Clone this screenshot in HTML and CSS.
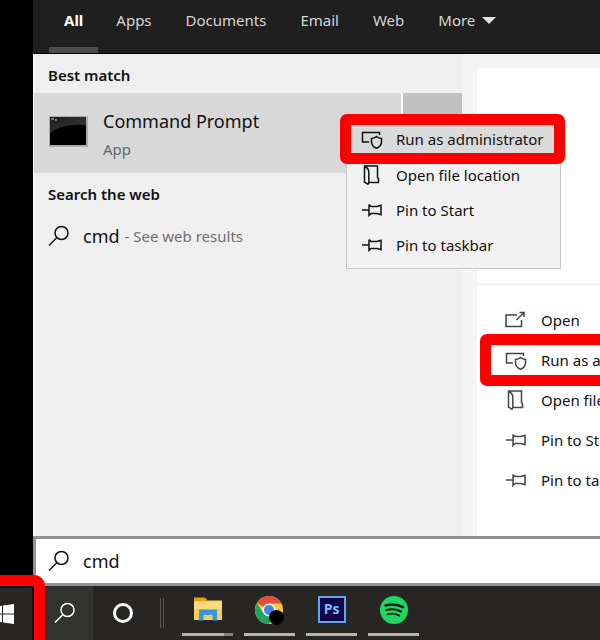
FILE: index.html
```html
<!DOCTYPE html>
<html lang="en">
<head>
  <meta charset="UTF-8">
  <title>Search - cmd</title>
  <meta name="viewport" content="width=device-width, initial-scale=1.0">
  <link rel="stylesheet" href="styles.css">
</head>
<body>
  <!-- Shared icons -->
  <svg class="sprite" aria-hidden="true">
    <symbol id="i-search" viewBox="0 0 22 22">
      <circle cx="13.5" cy="8" r="6.5"/>
      <path d="M9 12.5 1 20.5"/>
    </symbol>
    <symbol id="i-admin" viewBox="0 0 22 20">
      <path d="M8 13H1.500V3.500H18.500V6"/>
      <path d="M15.500 7.500c1.500 1.300 3 1.800 5 1.900v3.600c0 3-2 5-5 6.200-3-1.200-5-3.200-5-6.200V9.400c2-.1 3.500-.6 5-1.900z"/>
    </symbol>
    <symbol id="i-folder" viewBox="0 0 22 20">
      <path d="M8 17.500H17.500V14L16.500 12.500V1H3.500V17L7 19.300C8.300 18 7.800 16 7.800 14V7C7.800 4.500 6 2.500 3.500 1"/>
    </symbol>
    <symbol id="i-pin" viewBox="0 0 22 20">
      <path d="M1 10H8M8 4.500V15.500L10 13.500H16L20 14.800V5.200L16 6.500H10L8 4.500"/>
    </symbol>
    <symbol id="i-open" viewBox="0 0 22 20">
      <path d="M12 5H1V16.500H16.500V10M11.500 10 19 2.500M14.500 2.500H19V7"/>
    </symbol>
  </svg>

  <main class="search-window">
    <nav class="tabs">
      <button class="tab active">All</button>
      <button class="tab">Apps</button>
      <button class="tab">Documents</button>
      <button class="tab">Email</button>
      <button class="tab">Web</button>
      <button class="tab">More <span class="caret"></span></button>
    </nav>

    <div class="panes">
      <section class="results">
        <h2>Best match</h2>
        <div class="best">
          <button class="best-main">
            <svg class="cmd-icon" viewBox="0 0 39 31">
              <defs>
                <linearGradient id="shine" x1="0" y1="0" x2="1" y2="1">
                  <stop offset="0" stop-color="#1c1c1c"/>
                  <stop offset="1" stop-color="#3c3c3c"/>
                </linearGradient>
              </defs>
              <rect width="39" height="31" fill="#aaaab2"/>
              <rect x="1" y="1" width="36" height="28" fill="#000"/>
              <path d="M1 1H37V9C24 8 10 10 1 17z" fill="url(#shine)"/>
              <path d="M2 3h3M6 4h2" stroke="#ccc"/>
            </svg>
            <span class="best-text">
              <span class="best-name">Command Prompt</span>
              <span class="best-kind">App</span>
            </span>
          </button>
          <button class="best-more" aria-label="Show details"></button>

          <div class="context-menu">
            <button class="menu-item highlight"><svg class="icon"><use href="#i-admin"/></svg>Run as administrator</button>
            <button class="menu-item"><svg class="icon"><use href="#i-folder"/></svg>Open file location</button>
            <button class="menu-item"><svg class="icon"><use href="#i-pin"/></svg>Pin to Start</button>
            <button class="menu-item"><svg class="icon"><use href="#i-pin"/></svg>Pin to taskbar</button>
          </div>
        </div>

        <h2>Search the web</h2>
        <button class="web-result">
          <svg class="glass"><use href="#i-search"/></svg>
          <span class="query">cmd</span>
          <span class="hint">- See web results</span>
        </button>
      </section>

      <section class="preview">
        <div class="card app-card"></div>
        <div class="card actions">
          <button class="action"><svg class="icon"><use href="#i-open"/></svg>Open</button>
          <button class="action highlight"><svg class="icon"><use href="#i-admin"/></svg>Run as administrator</button>
          <button class="action"><svg class="icon"><use href="#i-folder"/></svg>Open file location</button>
          <button class="action"><svg class="icon"><use href="#i-pin"/></svg>Pin to Start</button>
          <button class="action"><svg class="icon"><use href="#i-pin"/></svg>Pin to taskbar</button>
        </div>
      </section>
    </div>

    <label class="search-box">
      <svg class="glass"><use href="#i-search"/></svg>
      <input type="text" value="cmd" aria-label="Search">
    </label>
  </main>

  <footer class="taskbar">
    <button class="start highlight" aria-label="Start">
      <svg width="14" height="20" viewBox="6 0 14 20" fill="#fff">
        <path d="M0 3 8 1.800V9.500H0zM9 1.600 20 0V9.500H9zM0 10.500H8V18.200L0 17zM9 10.500H20V20L9 18.400z"/>
      </svg>
    </button>
    <button class="task-search" aria-label="Search">
      <svg class="glass"><use href="#i-search"/></svg>
    </button>
    <button class="cortana" aria-label="Cortana"><span class="ring"></span></button>
    <span class="divider"></span>
    <div class="apps">
      <button class="app grouped" aria-label="File Explorer">
        <svg width="28" height="28" viewBox="0 0 28 28">
          <path d="M0 2.500H11L13 4.500H28V24H0z" fill="#f8ce55"/>
          <path d="M0 1.500H11L13 3.500V5.500H0z" fill="#e5a00d"/>
          <path d="M0 5.500H28V13H0z" fill="#fbdc7c"/>
          <path d="M5 24.500V13.500H23V24.500H18.500V19H9.500V24.500z" fill="#3597dc"/>
        </svg>
      </button>
      <button class="app" aria-label="Chrome">
        <svg width="30" height="30" viewBox="0 0 30 30">
          <circle cx="14" cy="15" r="14" fill="#fbc93d"/>
          <path d="M14 15 1.900 8A14 14 0 0 1 26.500 8.500H14z" fill="#dd4f43"/>
          <path d="M1.900 8A14 14 0 0 0 14 29L19.600 18.200 8.400 18.200z" fill="#1ea362"/>
          <circle cx="14" cy="15" r="6.500" fill="#f3f3f3"/>
          <circle cx="14" cy="15" r="5" fill="#4285e8"/>
          <circle cx="21.500" cy="22.500" r="7.500" fill="#000"/>
        </svg>
      </button>
      <button class="app" aria-label="Photoshop"><span class="ps">Ps</span></button>
      <button class="app" aria-label="Spotify">
        <svg width="28" height="28" viewBox="0 0 28 28">
          <circle cx="14" cy="14" r="14" fill="#1ed760"/>
          <g fill="none" stroke="#191919" stroke-linecap="round">
            <path d="M5.500 9.500C11 8 18 8.500 23 11.200" stroke-width="2.600"/>
            <path d="M6.500 14C11.500 12.700 17 13.300 21 15.500" stroke-width="2.200"/>
            <path d="M7.500 18.200C11.500 17.200 16 17.700 19.500 19.700" stroke-width="1.800"/>
          </g>
        </svg>
      </button>
    </div>
  </footer>
</body>
</html>
```
FILE: styles.css
```css
* {
  box-sizing: border-box;
}

body {
  margin: 0;
  min-height: 100vh;
  display: flex;
  flex-direction: column;
  background: #000;
  color: #111;
  font-family: "Noto Sans", "Open Sans", sans-serif;
  font-size: 15px;
  line-height: 20px;
  overflow: hidden;
}

button {
  margin: 0;
  padding: 0;
  border: none;
  background: none;
  color: inherit;
  font: inherit;
  text-align: left;
  white-space: nowrap;
}

svg {
  flex: none;
}

.sprite {
  position: absolute;
  width: 0;
  height: 0;
}

.icon {
  width: 22px;
  height: 20px;
  fill: none;
  stroke: currentColor;
  stroke-width: 1.5;
}

.glass {
  width: 22px;
  height: 22px;
  fill: none;
  stroke: currentColor;
  stroke-width: 1.5;
}

/* Red marker box round a control */
.highlight {
  position: relative;
}

.highlight::after {
  content: "";
  position: absolute;
  inset: -11px;
  border: 11px solid #f00;
  border-radius: 7px;
  z-index: 2;
}

.search-window {
  flex: 1;
  display: flex;
  flex-direction: column;
  margin-left: 33px;
}

/* Tabs */
.tabs {
  display: flex;
  gap: 2px;
  height: 54px;
  padding-left: 16px;
  background: #1f1f1f;
  border-bottom: 1px solid #000;
  color: #d6d6d6;
}

.tab {
  padding: 2px 16px 10px;
  border-bottom: 6px solid transparent;
}

.tab.active {
  padding-left: 15px;
  padding-right: 15px;
  color: #fff;
  font-weight: bold;
  border-color: #4b4b4b;
}

.caret {
  display: inline-block;
  margin-left: 3px;
  border: 7px solid transparent;
  border-top-color: #e0e0e0;
  border-bottom: none;
  vertical-align: 2px;
}

/* Results */
.panes {
  flex: 1;
  display: grid;
  grid-template-columns: 428px 1fr;
  border-left: 1px solid #fff;
  background: #f4f4f4;
}

.results {
  background: #efefef;
}

h2 {
  margin: 0;
  padding: 11px 14px 8px;
  font-size: 15px;
  line-height: 20px;
  font-weight: 600;
}

.best {
  position: relative;
  display: flex;
  gap: 2px;
  height: 80px;
  background: #fff;
}

.best-main {
  flex: 1;
  display: flex;
  align-items: center;
  gap: 15px;
  padding-left: 15px;
  background: #d8d8d8;
}

.cmd-icon {
  width: 39px;
  height: 31px;
  margin-top: -4px;
}

.best-text {
  display: flex;
  flex-direction: column;
  gap: 6px;
  padding-top: 2px;
}

.best-name {
  font-size: 18px;
  line-height: 24px;
}

.best-kind {
  color: #666;
}

.best-more {
  width: 59px;
  background: #c1c1c1;
}

.web-result {
  display: flex;
  align-items: center;
  width: 100%;
  padding: 12px 14px;
}

.query {
  margin: 0 5px 0 13px;
  font-size: 18px;
  line-height: 24px;
}

.hint {
  color: #707070;
}

/* Context menu */
.context-menu {
  position: absolute;
  left: 312px;
  top: 26px;
  z-index: 3;
  width: 215px;
  padding: 5px 6px 6px 4px;
  border: 1px solid #c8c8c8;
  background: #f2f2f2;
}

.menu-item {
  display: flex;
  align-items: center;
  gap: 13px;
  width: 100%;
  height: 35px;
  padding-left: 10px;
}

.menu-item.highlight {
  height: 28px;
  margin-bottom: 4px;
  background: #dadada;
}

/* Preview */
.preview {
  display: flex;
  flex-direction: column;
  gap: 3px;
  padding: 14px 0 0 15px;
  overflow: hidden;
}

.card {
  background: #fff;
}

.app-card {
  height: 215px;
}

.actions {
  flex: 1;
  display: flex;
  flex-direction: column;
  gap: 10px;
  padding: 19px 0 20px 14px;
}

.action {
  display: flex;
  align-items: center;
  gap: 14px;
  height: 30px;
  padding-left: 14px;
}

.action .icon {
  color: #444;
}

/* Search box */
.search-box {
  display: flex;
  align-items: center;
  height: 50px;
  padding-left: 12px;
  border: 3px solid #929292;
  border-right: none;
  background: #fff;
}

.search-box input {
  flex: 1;
  min-width: 0;
  margin-left: 13px;
  padding: 0;
  border: none;
  outline: none;
  color: inherit;
  font: inherit;
  font-size: 18px;
}

/* Taskbar */
.taskbar {
  display: flex;
  height: 54px;
  background: #272624;
  color: #fff;
}

.start {
  display: flex;
  align-items: center;
  width: 34px;
  border: solid #0c0c0c;
  border-width: 2px 2px 0 0;
}

.start.highlight::after {
  inset: -13px;
  border-radius: 11px;
}

.task-search {
  display: flex;
  align-items: center;
  width: 59px;
  padding-left: 20px;
  background: #333332;
}

.cortana {
  display: flex;
  align-items: center;
  justify-content: center;
  width: 60px;
}

.ring {
  width: 20px;
  height: 20px;
  border: 3px solid #fff;
  border-radius: 50%;
}

.divider {
  width: 4px;
  height: 30px;
  margin: 12px 18px 0 7px;
  border: solid #555;
  border-width: 0 1px;
}

.apps {
  display: flex;
  gap: 11px;
}

.app {
  display: flex;
  align-items: center;
  justify-content: center;
  width: 51px;
  height: 50px;
  border-bottom: 3px solid #b9b6b0;
}

.app.grouped {
  border-image: linear-gradient(to right, #b9b6b0 79%, #85837f 79%) 3;
}

.ps {
  width: 28px;
  height: 27px;
  border: 2px solid #5fa5e8;
  background: #10044c;
  color: #7cc0f8;
  font-family: "Open Sans", sans-serif;
  font-size: 14px;
  font-weight: bold;
  line-height: 22px;
  text-align: center;
}
```
